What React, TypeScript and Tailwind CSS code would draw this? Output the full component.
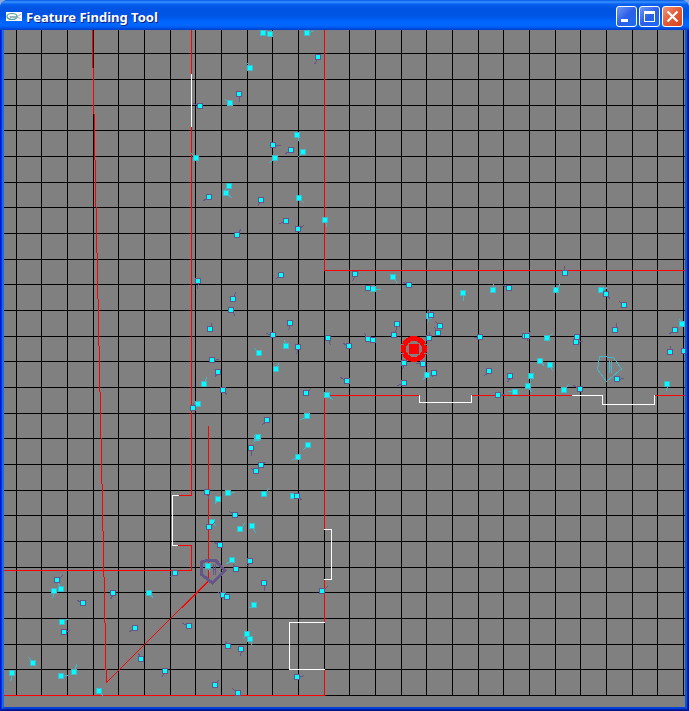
const GRID_X = [
  16, 41, 67, 93, 118, 144, 170, 195, 221, 247, 272, 298, 324, 349, 375, 401,
  426, 452, 478, 503, 529, 555, 580, 606, 632, 657, 683,
];

const GRID_Y = [
  53, 79, 105, 130, 156, 182, 207, 233, 259, 284, 310, 336, 361, 387, 413, 438,
  464, 490, 515, 541, 567, 592, 618, 644, 669, 695,
];

// x, y, heading dx, heading dy
type Feature = [number, number, number, number];

// features that matched the map
const MATCHED: Feature[] = [
  [196, 158, -5, -5], [230, 103, -5, -4], [263, 33, 0, 0], [270, 34, 1, -4],
  [307, 33, 7, -3], [250, 68, -3, -5], [297, 135, 2, 7], [303, 152, -5, 4],
  [275, 158, -6, 4], [229, 186, -4, 3], [226, 193, 6, 5], [299, 198, 5, 5],
  [325, 220, 1, 7], [259, 353, -5, -5], [286, 346, -2, -6], [393, 277, 4, 6],
  [373, 289, 7, 0], [463, 293, 0, 7], [493, 290, 0, -7], [429, 316, -2, 7],
  [427, 375, -5, 4], [327, 395, 6, 5], [556, 290, 3, -6], [601, 290, 6, -3],
  [682, 324, -3, -5], [547, 338, 5, -5], [540, 361, 4, 5], [550, 365, 2, 6],
  [528, 386, 3, 6], [531, 376, -1, 6], [515, 392, -7, -1], [564, 390, 4, -6],
  [667, 384, -1, 7], [204, 384, 2, -7], [198, 404, 0, 0], [276, 369, 2, -6],
  [307, 416, -7, 3], [257, 438, -5, 5], [258, 437, -5, 5], [308, 445, -5, 4],
  [298, 457, -6, 2], [228, 493, 7, -1], [218, 499, -4, 5], [264, 494, 4, -6],
  [293, 496, 0, 0], [61, 589, -3, -6], [54, 591, -2, 7], [149, 593, 4, 5],
  [62, 622, 6, -4], [33, 663, -5, -6], [12, 673, -2, 8], [61, 676, 7, -1],
  [74, 672, 2, -8], [99, 691, 4, 5], [212, 522, 4, 4], [240, 529, 4, -6],
  [252, 526, 3, 7], [232, 560, -6, 3], [254, 605, -5, 2], [247, 634, -5, 5],
  [250, 639, 2, 7],
];

const UNMATCHED: Feature[] = [
  [200, 106, -7, -3], [318, 57, -4, 7], [239, 94, 0, 7], [273, 145, 7, 0],
  [291, 150, -6, 3], [209, 197, -6, 3], [261, 200, -4, 6], [286, 221, -7, 2],
  [298, 229, 6, -5], [237, 235, 3, -6], [281, 275, -5, 3], [355, 274, -3, 7],
  [198, 281, -1, 8], [233, 299, 2, -7], [231, 310, 4, 6], [290, 323, -2, 7],
  [210, 329, 1, -6], [273, 335, -7, -2], [298, 347, -2, 7], [328, 338, 2, 7],
  [349, 346, -6, -3], [368, 288, 0, 0], [409, 285, -6, -3], [509, 288, -6, -3],
  [431, 315, -2, -6], [397, 324, -2, 7], [440, 326, -5, -5], [438, 333, -4, -6],
  [394, 335, 2, -7], [429, 338, 0, -7], [368, 339, -4, -6], [373, 340, 0, 0],
  [480, 337, -7, 0], [404, 363, -2, 6], [423, 364, -7, -1], [434, 373, -3, 4],
  [404, 383, -7, 2], [347, 381, -7, -4], [489, 371, -5, 4], [510, 376, -3, 6],
  [498, 395, 7, -1], [565, 273, -1, -7], [606, 294, 4, 5], [624, 305, -5, -4],
  [615, 330, 1, -7], [675, 330, -6, 3], [525, 336, 3, 5], [527, 336, 3, -5],
  [576, 342, 7, -1], [577, 337, 0, 0], [670, 352, 0, -7], [684, 351, 0, 0],
  [580, 389, -7, -4], [617, 379, 7, -1], [212, 360, 7, -1], [218, 372, -4, 5],
  [223, 390, 4, 5], [193, 408, 0, -6], [306, 393, 4, -5], [267, 420, -5, 4],
  [251, 448, 0, 7], [261, 465, 5, -4], [256, 471, -5, -3], [207, 492, 1, 7],
  [297, 496, 5, 4], [235, 515, -6, -4], [57, 580, 5, -5], [113, 593, -3, 6],
  [83, 603, -6, -3], [64, 632, 6, -2], [135, 628, -6, 3], [189, 626, -7, -3],
  [175, 573, -6, 4], [141, 659, -3, -6], [165, 671, -4, 6], [209, 527, 5, -5],
  [220, 545, -6, -3], [250, 561, -3, 5], [236, 569, -3, -5], [264, 583, 0, 7],
  [322, 591, 5, -5], [223, 595, -5, -3], [227, 597, 0, 0], [228, 646, -3, -5],
  [241, 649, -1, 7], [297, 677, 7, -2], [215, 685, 3, -5], [238, 693, -6, -5],
];

// sits on top of the current robot pose
const TRACKED: Feature[] = [[208, 566, 1, 6]];

function Features({ items, color }: { items: Feature[]; color: string }) {
  return (
    <g>
      {items.map(([x, y, dx, dy], i) => (
        <g key={i}>
          <path d={`M${x + 0.5} ${y + 0.5}l${dx} ${dy}`} stroke={color} />
          <rect x={x - 3} y={y - 3} width="6" height="6" fill={color} />
          <rect x={x - 2} y={y - 2} width="4" height="4" fill="#00ffff" />
        </g>
      ))}
    </g>
  );
}

function FeatureMap() {
  return (
    <svg
      viewBox="4 30 681 677"
      className="block h-auto w-full bg-[#808080]"
      fill="none"
      shapeRendering="crispEdges"
      role="img"
      aria-label="Feature map"
    >
      {/* grid */}
      <g fill="#000000">
        {GRID_X.map((x) => (
          <rect key={x} x={x} y="30" width="1" height="666" />
        ))}
        {GRID_Y.map((y) => (
          <rect key={y} x="4" y={y} width="681" height="1" />
        ))}
      </g>

      {/* walls */}
      <g stroke="#ff0000">
        <path d="M92.2 30L106.3 682.5L208.5 581V426" />
        <path d="M191.5 30V495.5H179M178 545.5H191.5V570.5H4" />
        <path d="M324.5 30V270.5H685" />
        <path d="M419 395.5H324.5V529M324.5 580V622M324.5 670V695.5H4" />
        <path d="M472 395.5H572M655 395.5H685" />
      </g>

      {/* doors */}
      <g stroke="#ffffff">
        <path d="M191.5 74V127" />
        <path d="M179 495.5H172.5V545.5H178" />
        <path d="M419.5 395V402.5H471.5V395" />
        <path d="M572 395.5H602.5V404.5H654.5V395" />
        <path d="M324 529.5H331.5V579.5H324" />
        <path d="M325 622.5H289.5V669.5H325" />
      </g>

      <Features items={MATCHED} color="#44b8c8" />
      <Features items={UNMATCHED} color="#665588" />

      {/* robot poses */}
      <g stroke="#44b8c8">
        <path d="M599.5 356.5L613.5 357.5L621.5 369L606.5 381.5L597.5 369.5Z" />
        <path d="M609.5 361V373M611.5 361V373M609 366.5H612" />
      </g>
      <g stroke="#665588">
        <path d="M201.5 562L206.5 560.5H215.5L225 570.5L212.5 583L201.5 574.5Z" strokeWidth="3" />
        <path d="M213.5 564V575M215.5 564V575M213 569.5H216" />
      </g>
      <Features items={TRACKED} color="#44b8c8" />

      {/* goal */}
      <circle cx="414" cy="349" r="8" fill="#808080" />
      <circle cx="414" cy="349" r="10.5" stroke="#ff0000" strokeWidth="5" />
      <path
        d="M401 344.5h3M401 353.5h3M424 344.5h3M424 353.5h3"
        stroke="#808080"
      />
      <circle cx="414" cy="349" r="7" stroke="#808080" strokeWidth="2" />
      <rect x="409" y="344" width="10" height="10" rx="1" fill="#ff0000" />
    </svg>
  );
}

const captionButton =
  "flex size-[21px] items-center justify-center rounded-[3px] border border-white";

export default function App() {
  return (
    <div className="w-full bg-[#8ba6dc]">
      <div className="overflow-hidden rounded-t-[8px] bg-[#0a4fe0]">
        <header className="flex h-[30px] items-center gap-1 bg-[linear-gradient(to_bottom,#0058e6_0px,#3a93ff_2px,#0a62f0_4px,#0054e3_8px,#0055e5_16px,#0066ff_22px,#0066fc_26px,#0048d8_29px,#003cc4_30px)] px-[6px] pt-[3px]">
          <svg viewBox="0 0 16 9" className="mb-px h-[9px] w-4 bg-white" fill="none" aria-hidden="true">
            <ellipse cx="6" cy="4.5" rx="5" ry="3" stroke="#4f9a9a" strokeWidth="1.2" />
            <path d="M3.5 4.5h8L15 2M4 5.5h7.5l3 1" stroke="#7aa5ac" strokeWidth="0.8" />
          </svg>
          <h1 className="flex-1 truncate pt-0.5 font-['Noto_Sans',sans-serif] text-[13px] font-bold text-white [text-shadow:1px_1px_#0a1f84]">
            Feature Finding Tool
          </h1>
          <div className="flex gap-[2px]">
            <button type="button" aria-label="Minimize" className={`${captionButton} bg-[linear-gradient(135deg,#6f97f5,#2c5fe8_50%,#1c6cf0)]`}>
              <svg viewBox="0 0 19 19" className="size-[19px]" shapeRendering="crispEdges">
                <rect x="4" y="12" width="7" height="3" fill="#fff" />
              </svg>
            </button>
            <button type="button" aria-label="Maximize" className={`${captionButton} bg-[linear-gradient(135deg,#6f97f5,#2c5fe8_50%,#1c6cf0)]`}>
              <svg viewBox="0 0 19 19" className="size-[19px]" shapeRendering="crispEdges">
                <path d="M4 4h11v11H4zM5 7v7h9V7z" fill="#fff" fillRule="evenodd" />
              </svg>
            </button>
            <button type="button" aria-label="Close" className={`${captionButton} bg-[linear-gradient(135deg,#f0957c,#e25a35_50%,#d8431f)]`}>
              <svg viewBox="0 0 19 19" className="size-[19px]">
                <path d="M4.5 4.5l10 10M14.5 4.5l-10 10" stroke="#fff" strokeWidth="2.2" />
              </svg>
            </button>
          </div>
        </header>
        {/* bevelled frame */}
        <main className="border-x border-b border-t-0 border-l-[#0019cf] border-r-[#00138c] border-b-[#00138c]">
          <div className="border-x border-b border-l-[#0831d9] border-r-[#001ea0] border-b-[#001ea0]">
            <div className="border-x-2 border-b-2 border-l-[#166aee] border-r-[#0855dd] border-b-[#0441d8]">
              <FeatureMap />
            </div>
          </div>
        </main>
      </div>
    </div>
  );
}
